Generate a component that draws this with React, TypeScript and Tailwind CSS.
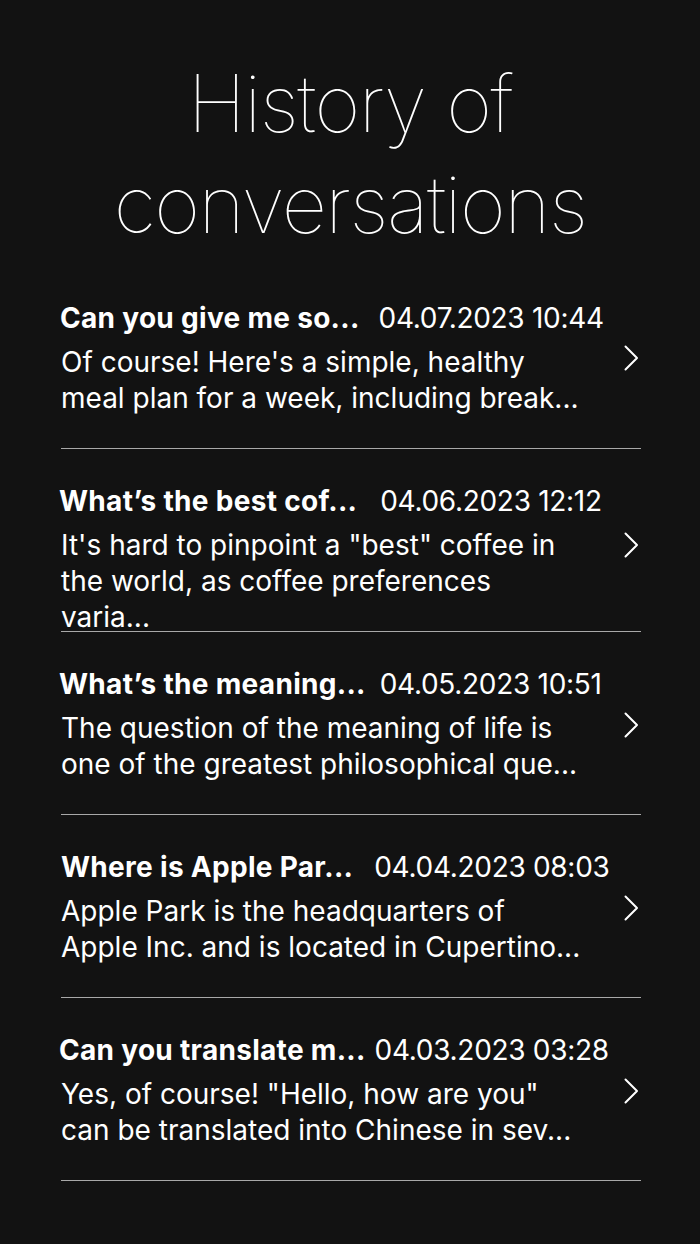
import React from "react";

type Item = {
  title: string;
  date: string;
  lines: string[];
  gap: string;
  titleOffset: string;
  chevTop: string;
};

const items: Item[] = [
  {
    title: "Can you give me so...",
    date: "04.07.2023 10:44",
    lines: ["Of course! Here's a simple, healthy", "meal plan for a week, including break..."],
    gap: "gap-[19px]",
    titleOffset: "ml-[-1px]",
    chevTop: "top-[79px]",
  },
  {
    title: "What\u2019s the best cof...",
    date: "04.06.2023 12:12",
    lines: ["It's hard to pinpoint a \"best\" coffee in", "the world, as coffee preferences", "varia..."],
    gap: "gap-[23px]",
    titleOffset: "ml-[-2px]",
    chevTop: "top-[83px]",
  },
  {
    title: "What\u2019s the meaning...",
    date: "04.05.2023 10:51",
    lines: ["The question of the meaning of life is", "one of the greatest philosophical que..."],
    gap: "gap-[14px]",
    titleOffset: "ml-[-2px]",
    chevTop: "top-[80px]",
  },
  {
    title: "Where is Apple Par...",
    date: "04.04.2023 08:03",
    lines: ["Apple Park is the headquarters of", "Apple Inc. and is located in Cupertino..."],
    gap: "gap-[21px]",
    titleOffset: "ml-[0px]",
    chevTop: "top-[80px]",
  },
  {
    title: "Can you translate m...",
    date: "04.03.2023 03:28",
    lines: ["Yes, of course! \"Hello, how are you\"", "can be translated into Chinese in sev..."],
    gap: "gap-[9px]",
    titleOffset: "ml-[-2px]",
    chevTop: "top-[80px]",
  },
];

function Chevron() {
  return (
    <svg width="16" height="26" viewBox="0 0 16 26" fill="none" className="block">
      <polyline
        points="2.5,1.5 14,13 2.5,24.5"
        stroke="#ffffff"
        strokeWidth="2"
        strokeLinecap="round"
        strokeLinejoin="round"
      />
    </svg>
  );
}

function Row({ item }: { item: Item }) {
  return (
    <div className="relative h-[183px] w-[580px] ml-[61px] border-b-[1.5px] border-[#a8a8a8]">
      <div className={`flex items-center pt-[35px] ${item.gap} ${item.titleOffset}`}>
        <span className="text-[28px] leading-[34px] font-bold text-white whitespace-nowrap tracking-[0.3px]">
          {item.title}
        </span>
        <span className="text-[28px] leading-[34px] font-normal text-white whitespace-nowrap tracking-[-0.3px]">
          {item.date}
        </span>
      </div>
      <div className="mt-[9px] text-[28px] leading-[36px] text-white">
        {item.lines.map((l, i) => (
          <div key={i} className="whitespace-nowrap">
            {l}
          </div>
        ))}
      </div>
      <div className={`absolute right-[2px] ${item.chevTop}`}>
        <Chevron />
      </div>
    </div>
  );
}

export default function App() {
  return (
    <div
      className="w-[700px] h-[1244px] bg-[#121212] overflow-hidden"
      style={{ fontFamily: "Inter, 'Noto Sans', 'Liberation Sans', sans-serif" }}
    >
      <h1 className="pt-[53px] text-center text-white font-thin text-[79px] leading-[101px] tracking-[-1.5px]">
        History of
        <br />
        conversations
      </h1>
      <div className="mt-[11px]">
        {items.map((it, i) => (
          <Row key={i} item={it} />
        ))}
      </div>
    </div>
  );
}
